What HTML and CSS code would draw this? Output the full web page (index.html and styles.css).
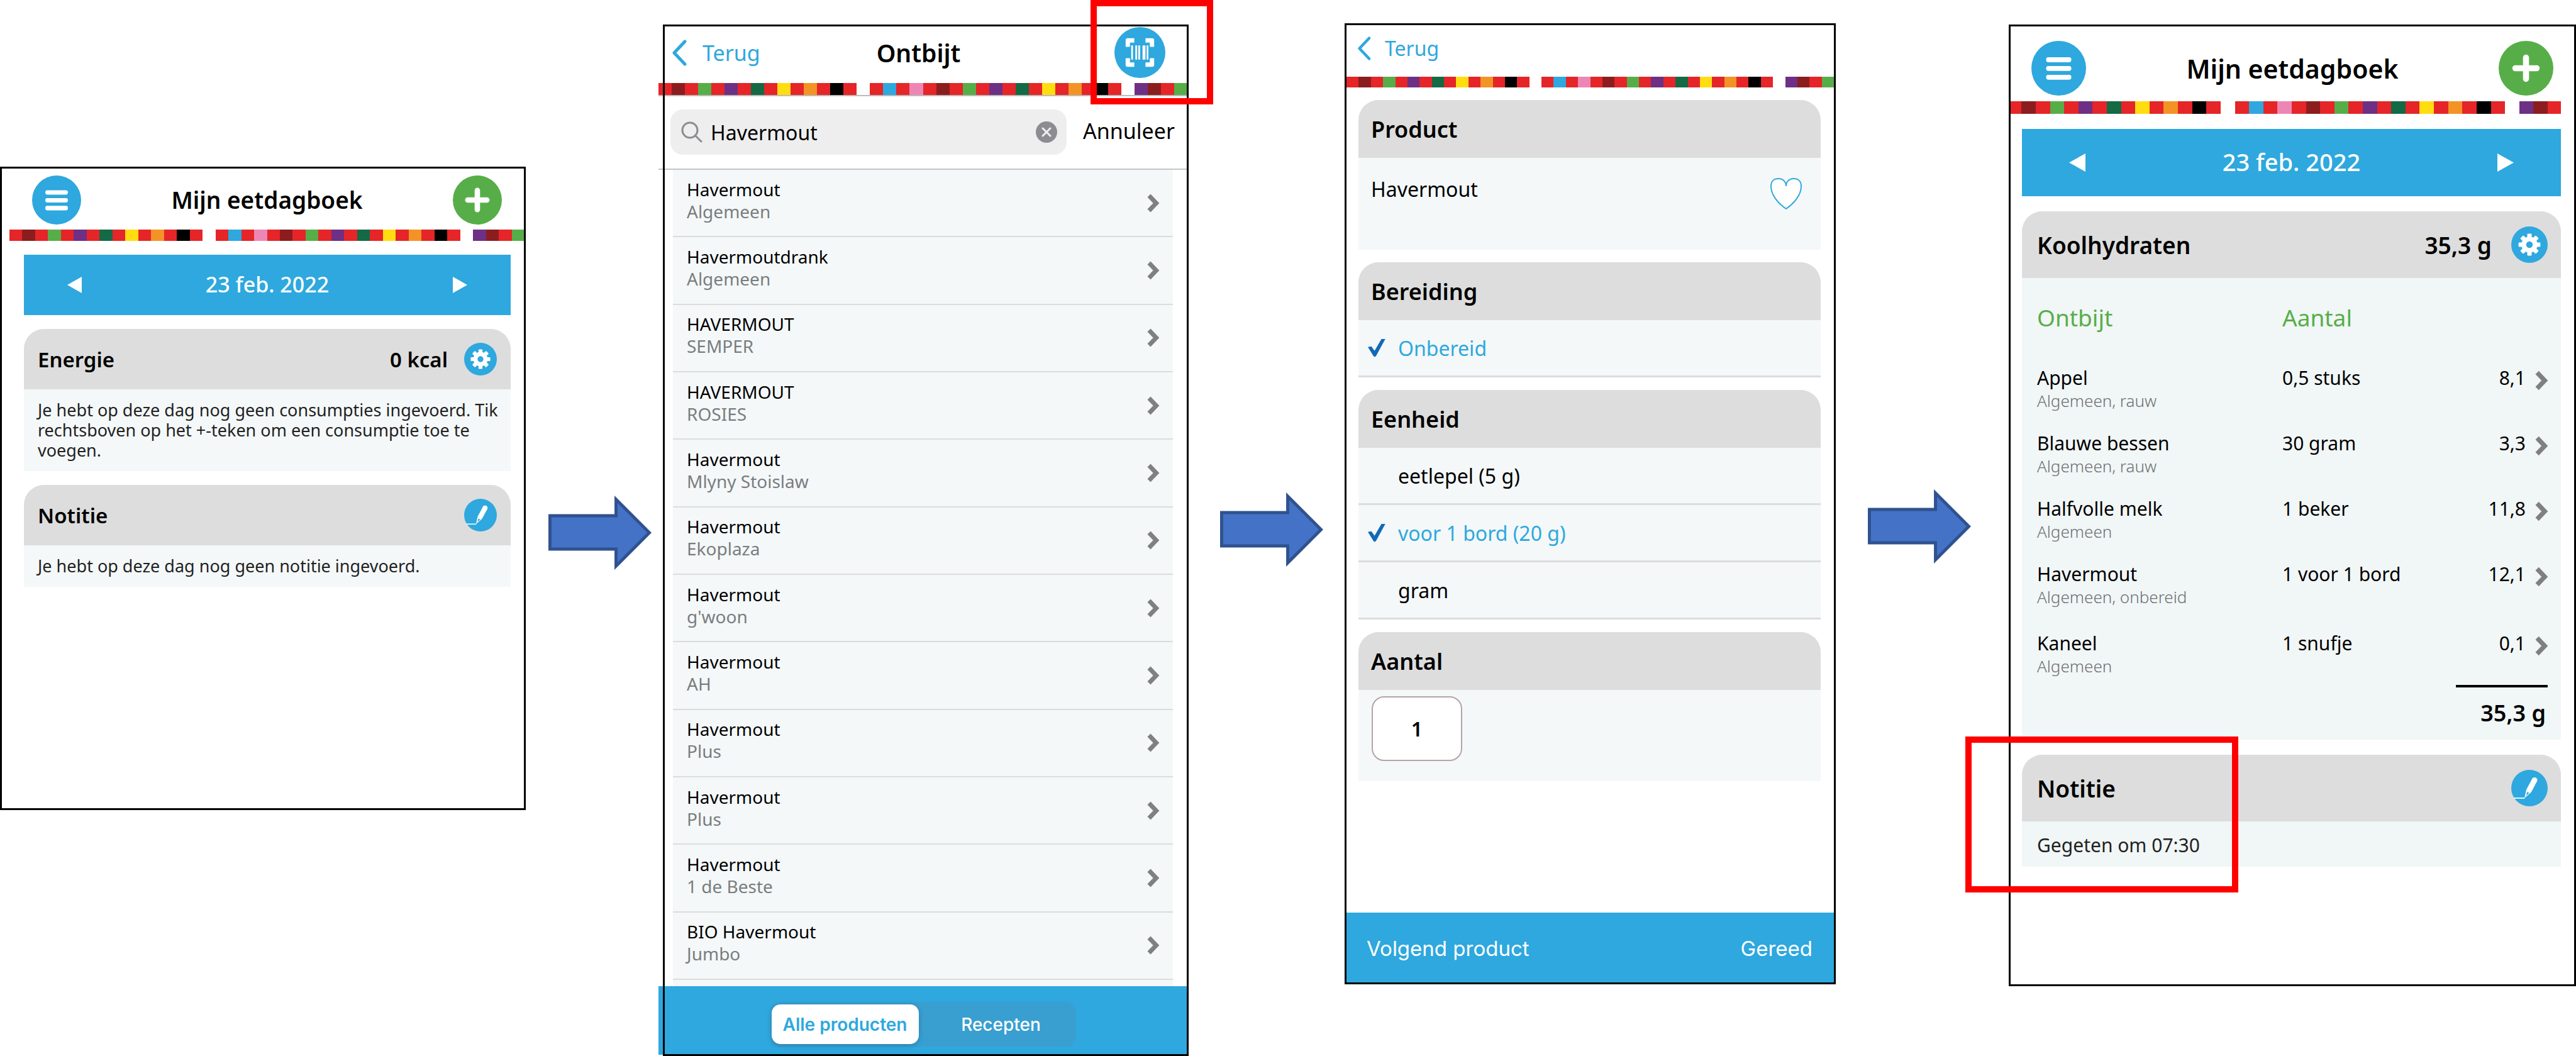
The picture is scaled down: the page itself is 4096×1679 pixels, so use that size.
FILE: index.html
```html
<!DOCTYPE html>
<html lang="nl">
<head>
<meta charset="utf-8">
<meta name="viewport" content="width=device-width, initial-scale=1">
<title>Mijn eetdagboek</title>
<link rel="stylesheet" href="styles.css">
</head>
<body>
<svg class="sprite" aria-hidden="true">
  <symbol id="menu" viewBox="0 0 100 100">
    <circle cx="50" cy="50" r="50" fill="#2ea8de"/>
    <g fill="#fff"><rect x="27" y="30" width="46" height="9" rx="4"/><rect x="27" y="46" width="46" height="9" rx="4"/><rect x="27" y="62" width="46" height="9" rx="4"/></g>
  </symbol>
  <symbol id="plus" viewBox="0 0 100 100">
    <circle cx="50" cy="50" r="50" fill="#57ae48"/>
    <path d="M50 30.500V69.500M30.500 50H69.500" stroke="#fff" stroke-width="11" stroke-linecap="round"/>
  </symbol>
  <symbol id="gear" viewBox="0 0 100 100">
    <circle cx="50" cy="50" r="50" fill="#2ea8de"/>
    <g fill="#fff">
      <circle cx="50" cy="50" r="22"/>
      <g><rect x="44" y="20" width="12" height="60" rx="2"/><rect x="20" y="44" width="60" height="12" rx="2"/></g>
      <g transform="rotate(45 50 50)"><rect x="44" y="20" width="12" height="60" rx="2"/><rect x="20" y="44" width="60" height="12" rx="2"/></g>
    </g>
    <circle cx="50" cy="50" r="9" fill="#2ea8de"/>
  </symbol>
  <symbol id="pen" viewBox="0 0 100 100">
    <circle cx="50" cy="50" r="50" fill="#2ea8de"/>
    <circle cx="64" cy="28" r="7.500" fill="#fff"/>
    <path d="M64 28L48 58" stroke="#fff" stroke-width="15"/>
    <path d="M54.600 61.500L41.400 54.500L36.500 77Z" fill="#fff"/>
    <path d="M43.500 60.500L49.500 63.500L41 70.500Z" fill="#2ea8de"/>
    <path d="M7 77.500H37" stroke="#fff" stroke-width="3"/>
  </symbol>
  <symbol id="scan" viewBox="0 0 100 100">
    <circle cx="50" cy="50" r="50" fill="#2ea8de"/>
    <g fill="#fff">
      <path d="M22 39V26a4 4 0 0 1 4-4H39V30.500H30.500V39Z"/>
      <path d="M22 39V26a4 4 0 0 1 4-4H39V30.500H30.500V39Z" transform="rotate(90 50 50)"/>
      <path d="M22 39V26a4 4 0 0 1 4-4H39V30.500H30.500V39Z" transform="rotate(180 50 50)"/>
      <path d="M22 39V26a4 4 0 0 1 4-4H39V30.500H30.500V39Z" transform="rotate(270 50 50)"/>
      <path d="M33 36h3.400v28H33zM41 36h3.600v28H41zM46.800 36h3.600v28h-3.600zM55.200 36h5.700v28h-5.700zM63.300 36h3.300v28h-3.300z"/>
    </g>
  </symbol>
  <symbol id="back" viewBox="0 0 24 42" preserveAspectRatio="xMinYMid meet">
    <path d="M21 3L4 21L21 39" fill="none" stroke="#2ea8de" stroke-width="5" stroke-linecap="round" stroke-linejoin="round"/>
  </symbol>
  <symbol id="next" viewBox="0 0 20 30">
    <path d="M3 3L14.500 15L3 27" fill="none" stroke="#808080" stroke-width="7"/>
  </symbol>
  <symbol id="heart" viewBox="0 0 50 50">
    <path d="M25 49C12 40 1 27 1 13C1 5 6 1 13 1C20 1 25 6 25 13C25 6 30 1 37 1C44 1 49 5 49 13C49 27 38 40 25 49Z" fill="#fff" stroke="#2ea8de" stroke-width="2"/>
  </symbol>
  <symbol id="loupe" viewBox="0 0 34 34">
    <circle cx="14" cy="14" r="12" fill="none" stroke="#8d8c92" stroke-width="3"/>
    <path d="M22.500 22.500L32 32" stroke="#8d8c92" stroke-width="3" stroke-linecap="round"/>
  </symbol>
  <symbol id="clear" viewBox="0 0 34 34">
    <circle cx="17" cy="17" r="17" fill="#8d8c92"/>
    <path d="M11 11L23 23M23 11L11 23" stroke="#efefef" stroke-width="3" stroke-linecap="round"/>
  </symbol>
  <symbol id="arrow" viewBox="0 0 167 120">
    <path d="M2.500 32.500H109.500V6L163.500 60L109.500 114V86.500H2.500Z" fill="#4472c6" stroke="#2f528f" stroke-width="5"/>
  </symbol>
  <symbol id="tiles" viewBox="0 0 40 1" preserveAspectRatio="none">
    <g shape-rendering="crispEdges">
      <path fill="#e52528" d="M0 0h15v1H0zM16 0h19v1H16zM38 0h1v1h-1z"/>
      <path fill="#8c1d1f" d="M1 0h1v1H1zM21 0h1v1h-1zM37 0h1v1h-1z"/>
      <path fill="#57ae48" d="M3 0h1v1H3zM23 0h1v1h-1zM39 0h1v1h-1z"/>
      <path fill="#6d3085" d="M5 0h1v1H5zM25 0h1v1h-1zM36 0h1v1h-1z"/>
      <path fill="#136a45" d="M7 0h1v1H7zM27 0h1v1h-1z"/>
      <path fill="#ffdd10" d="M9 0h1v1H9zM29 0h1v1h-1z"/>
      <path fill="#f39325" d="M11 0h1v1h-1zM31 0h1v1h-1z"/>
      <path fill="#000" d="M13 0h1v1h-1zM33 0h1v1h-1z"/>
      <path fill="#2ea8de" d="M17 0h1v1h-1z"/>
      <path fill="#ee86b5" d="M19 0h1v1h-1z"/>
    </g>
  </symbol>
</svg>

<main class="flow">
  <section class="screen diary">
    <header class="topbar">
      <button class="round" aria-label="Menu"><svg><use href="#menu"/></svg></button>
      <h1 class="title">Mijn eetdagboek</h1>
      <button class="round" aria-label="Toevoegen"><svg><use href="#plus"/></svg></button>
    </header>
    <svg class="tiles"><use href="#tiles"/></svg>
    <nav class="datebar">
      <button class="step step-back" aria-label="Vorige dag"></button>
      <span>23 feb. 2022</span>
      <button class="step step-on" aria-label="Volgende dag"></button>
    </nav>
    <article class="card">
      <header class="card-head">
        <h2>Energie</h2>
        <span class="amount">0 kcal</span>
        <button class="tool" aria-label="Instellingen"><svg><use href="#gear"/></svg></button>
      </header>
      <p class="note">Je hebt op deze dag nog geen consumpties ingevoerd. Tik rechtsboven op het +-teken om een consumptie toe te voegen.</p>
    </article>
    <article class="card">
      <header class="card-head">
        <h2>Notitie</h2>
        <button class="tool" aria-label="Bewerken"><svg><use href="#pen"/></svg></button>
      </header>
      <p class="note">Je hebt op deze dag nog geen notitie ingevoerd.</p>
    </article>
  </section>

  <div class="arrow arrow-1"><svg><use href="#arrow"/></svg></div>

  <section class="screen search">
    <div class="search-inner">
      <header class="topbar">
        <a class="back" href="#"><svg><use href="#back"/></svg>Terug</a>
        <h1 class="title">Ontbijt</h1>
        <button class="round" aria-label="Scan streepjescode"><svg><use href="#scan"/></svg></button>
      </header>
      <svg class="tiles"><use href="#tiles"/></svg>
      <form class="searchbar">
        <div class="field">
          <label for="q" aria-label="Zoek product"><svg class="loupe"><use href="#loupe"/></svg></label>
          <input id="q" type="text" value="Havermout">
          <button type="button" class="clear" aria-label="Wissen"><svg><use href="#clear"/></svg></button>
        </div>
        <button type="button" class="cancel">Annuleer</button>
      </form>
      <div class="results">
        <a href="#"><span>Havermout<small>Algemeen</small></span><svg><use href="#next"/></svg></a>
        <a href="#"><span>Havermoutdrank<small>Algemeen</small></span><svg><use href="#next"/></svg></a>
        <a href="#"><span>HAVERMOUT<small>SEMPER</small></span><svg><use href="#next"/></svg></a>
        <a href="#"><span>HAVERMOUT<small>ROSIES</small></span><svg><use href="#next"/></svg></a>
        <a href="#"><span>Havermout<small>Mlyny Stoislaw</small></span><svg><use href="#next"/></svg></a>
        <a href="#"><span>Havermout<small>Ekoplaza</small></span><svg><use href="#next"/></svg></a>
        <a href="#"><span>Havermout<small>g'woon</small></span><svg><use href="#next"/></svg></a>
        <a href="#"><span>Havermout<small>AH</small></span><svg><use href="#next"/></svg></a>
        <a href="#"><span>Havermout<small>Plus</small></span><svg><use href="#next"/></svg></a>
        <a href="#"><span>Havermout<small>Plus</small></span><svg><use href="#next"/></svg></a>
        <a href="#"><span>Havermout<small>1 de Beste</small></span><svg><use href="#next"/></svg></a>
        <a href="#"><span>BIO Havermout<small>Jumbo</small></span><svg><use href="#next"/></svg></a>
      </div>
      <footer class="tabs">
        <div class="segments">
          <button class="on">Alle producten</button>
          <button>Recepten</button>
        </div>
      </footer>
    </div>
    <div class="mark mark-scan"></div>
  </section>

  <div class="arrow arrow-2"><svg><use href="#arrow"/></svg></div>

  <section class="screen product">
    <header class="topbar">
      <a class="back" href="#"><svg><use href="#back"/></svg>Terug</a>
    </header>
    <svg class="tiles"><use href="#tiles"/></svg>
    <article class="card">
      <header class="card-head"><h2>Product</h2></header>
      <div class="chosen">
        <span>Havermout</span>
        <button class="like" aria-label="Favoriet"><svg><use href="#heart"/></svg></button>
      </div>
    </article>
    <article class="card">
      <header class="card-head"><h2>Bereiding</h2></header>
      <label class="option"><input type="radio" name="bereiding" checked><span>Onbereid</span></label>
    </article>
    <article class="card">
      <header class="card-head"><h2>Eenheid</h2></header>
      <label class="option"><input type="radio" name="eenheid"><span>eetlepel (5 g)</span></label>
      <label class="option"><input type="radio" name="eenheid" checked><span>voor 1 bord (20 g)</span></label>
      <label class="option"><input type="radio" name="eenheid"><span>gram</span></label>
    </article>
    <article class="card">
      <header class="card-head"><h2><label for="aantal">Aantal</label></h2></header>
      <div class="count"><input id="aantal" type="text" inputmode="numeric" value="1"></div>
    </article>
    <footer class="actions">
      <button>Volgend product</button>
      <button>Gereed</button>
    </footer>
  </section>

  <div class="arrow arrow-3"><svg><use href="#arrow"/></svg></div>

  <section class="screen diary diary-filled">
    <header class="topbar">
      <button class="round" aria-label="Menu"><svg><use href="#menu"/></svg></button>
      <h1 class="title">Mijn eetdagboek</h1>
      <button class="round" aria-label="Toevoegen"><svg><use href="#plus"/></svg></button>
    </header>
    <svg class="tiles" viewBox="0 0 3883 100" preserveAspectRatio="none"><use href="#tiles" x="-10" width="4000" height="100"/></svg>
    <nav class="datebar">
      <button class="step step-back" aria-label="Vorige dag"></button>
      <span>23 feb. 2022</span>
      <button class="step step-on" aria-label="Volgende dag"></button>
    </nav>
    <article class="card">
      <header class="card-head">
        <h2>Koolhydraten</h2>
        <span class="amount">35,3 g</span>
        <button class="tool" aria-label="Instellingen"><svg><use href="#gear"/></svg></button>
      </header>
      <table class="meals">
        <colgroup><col class="col-name"><col><col class="col-value"><col class="col-next"></colgroup>
        <thead><tr><th>Ontbijt</th><th>Aantal</th><th></th><th></th></tr></thead>
        <tbody>
          <tr><td>Appel<small>Algemeen, rauw</small></td><td>0,5 stuks</td><td>8,1</td><td><a href="#" aria-label="Appel"><svg><use href="#next"/></svg></a></td></tr>
          <tr><td>Blauwe bessen<small>Algemeen, rauw</small></td><td>30 gram</td><td>3,3</td><td><a href="#" aria-label="Blauwe bessen"><svg><use href="#next"/></svg></a></td></tr>
          <tr><td>Halfvolle melk<small>Algemeen</small></td><td>1 beker</td><td>11,8</td><td><a href="#" aria-label="Halfvolle melk"><svg><use href="#next"/></svg></a></td></tr>
          <tr><td>Havermout<small>Algemeen, onbereid</small></td><td>1 voor 1 bord</td><td>12,1</td><td><a href="#" aria-label="Havermout"><svg><use href="#next"/></svg></a></td></tr>
          <tr><td>Kaneel<small>Algemeen</small></td><td>1 snufje</td><td>0,1</td><td><a href="#" aria-label="Kaneel"><svg><use href="#next"/></svg></a></td></tr>
        </tbody>
        <tfoot><tr><td colspan="4"><span class="total">35,3 g</span></td></tr></tfoot>
      </table>
    </article>
    <article class="card">
      <header class="card-head">
        <h2>Notitie</h2>
        <button class="tool" aria-label="Bewerken"><svg><use href="#pen"/></svg></button>
      </header>
      <p class="note">Gegeten om 07:30</p>
      <div class="mark mark-note"></div>
    </article>
  </section>
</main>
</body>
</html>
```

FILE: styles.css
```css
* { box-sizing: border-box; }

body {
  margin: 0;
  background: #fff;
  color: #000;
  font-family: "Noto Sans", sans-serif;
}

h1, h2, p { margin: 0; }
button, input { font: inherit; color: inherit; margin: 0; padding: 0; border: 0; background: none; }
a { color: inherit; text-decoration: none; }
svg { display: block; }
small { display: block; }
.sprite { position: absolute; width: 0; height: 0; }

.flow {
  display: grid;
  grid-template-columns: 836fr 218fr 836fr 248fr 781fr 275fr 902fr;
  align-items: start;
  min-height: 100vh;
}

/* Arrows between the screens */
.arrow { display: flex; justify-content: flex-end; }
.arrow svg { width: 164px; height: 118px; }
.arrow-1 { padding: 788px 18px 0 0; }
.arrow-2 { padding: 783px 34px 0 0; }
.arrow-3 { padding: 778px 60px 0 0; }

/* Screen frame, drawn over the content */
.screen { position: relative; display: flex; flex-direction: column; }
.screen::after {
  content: "";
  position: absolute;
  inset: 0;
  border: 3px solid #000;
  pointer-events: none;
}

.mark { position: absolute; z-index: 2; border: 10px solid #f00; pointer-events: none; }
.mark-scan { top: -39px; right: -39px; width: 195px; height: 166px; }
.mark-note { top: -29px; left: -90px; width: 434px; height: 248px; }

.topbar { display: flex; align-items: center; justify-content: space-between; }
.title { font-weight: 600; line-height: 48px; }
.round svg { width: 100%; height: 100%; }
.back { display: flex; align-items: center; color: #2ea8de; }
.tiles { width: auto; }

/* Cards */
.card { position: relative; background: #f4f8f9; border-radius: 32px 32px 0 0; }
.card-head {
  display: flex;
  align-items: center;
  background: #ddd;
  border-radius: 32px 32px 0 0;
  font-weight: 600;
}
.card-head h2 { flex: 1; font-size: inherit; font-weight: inherit; }
.tool svg { width: 100%; height: 100%; }
.note { color: #222; }

/* Diary */
.diary { margin-top: 265px; padding-bottom: 355px; }
.diary .topbar { padding: 14px 38px 8px 51px; }
.diary .round { width: 78px; height: 78px; }
.diary .title { font-size: 37px; }
.diary .tiles { height: 18px; margin: 0 2px 0 15px; }
.datebar {
  display: flex;
  align-items: center;
  justify-content: space-between;
  height: 96px;
  margin: 22px 24px 0 38px;
  padding: 0 69px;
  background: #2ea8de;
  color: #fff;
  font-size: 34px;
  font-weight: 500;
}
.datebar span { padding-bottom: 3px; }
.step { width: 23px; height: 26px; background: #fff; }
.step-back { clip-path: polygon(100% 0, 100% 100%, 0 50%); }
.step-on { clip-path: polygon(0 0, 100% 50%, 0 100%); }
.diary .card { margin: 22px 24px 0 38px; }
.diary .card-head { height: 96px; padding: 0 22px; font-size: 33px; }
.diary .tool { width: 52px; height: 52px; margin-left: 26px; }
.diary .note { padding: 17px 8px 17px 22px; font-size: 27px; line-height: 32px; }

/* Diary with a meal */
.diary-filled { margin-top: 39px; padding-bottom: 190px; }
.diary-filled .topbar { padding: 26px 36px 9px; }
.diary-filled .round { width: 87px; height: 87px; }
.diary-filled .title { font-size: 41px; }
.diary-filled .tiles { height: 20px; margin: 0 24px 0 0; }
.diary-filled .datebar { height: 107px; margin: 24px 24px 0 21px; padding: 0 75px; font-size: 38px; }
.diary-filled .step { width: 26px; height: 29px; }
.diary-filled .card { margin: 24px 24px 0 21px; background: #f1f6f6; }
.diary-filled .card-head { height: 106px; padding: 0 21px 0 24px; font-size: 37px; }
.diary-filled .tool { width: 58px; height: 58px; margin-left: 31px; }
.diary-filled .note { padding: 20px 8px 16px 24px; font-size: 30px; line-height: 36px; }

.meals { width: 100%; table-layout: fixed; border-collapse: collapse; font-size: 30px; line-height: 36px; }
.meals .col-name { width: 414px; }
.meals .col-value { width: 140px; }
.meals .col-next { width: 56px; }
.meals th { height: 125px; padding: 0; color: #57ae48; font-size: 37px; font-weight: 400; text-align: left; }
.meals td { padding: 16px 0; vertical-align: top; }
.meals th:first-child, .meals td:first-child { padding-left: 24px; }
.meals td:nth-child(3) { text-align: right; }
.meals td:nth-child(4) { padding: 22px 0 0 15px; }
.meals small { color: #6c7071; font-size: 26px; font-weight: 300; }
.meals svg { width: 21px; height: 32px; }
.meals tbody tr:last-child td { padding-top: 22px; padding-bottom: 12px; }
.meals tbody tr:last-child td:nth-child(4) { padding-top: 28px; }
.meals tfoot td { padding: 0 21px 0 0; }
.total {
  display: block;
  width: 146px;
  height: 87px;
  margin-left: auto;
  padding-right: 3px;
  border-top: 4px solid #000;
  font-size: 36px;
  font-weight: 600;
  line-height: 82px;
  text-align: right;
}

/* Search */
.search { margin-top: 39px; align-self: stretch; }
.search-inner { flex: 1; display: flex; flex-direction: column; margin: 0 2px 2px -7px; }
.search .topbar { display: grid; grid-template-columns: 1fr auto 1fr; padding: 4px 35px 8px 21px; }
.search .back { gap: 24px; font-size: 34px; }
.search .back svg { width: 25px; height: 42px; }
.search .title { font-size: 39px; }
.search .round { width: 81px; height: 81px; justify-self: end; }
.search .tiles { height: 19px; }
.searchbar {
  display: flex;
  align-items: center;
  gap: 26px;
  padding: 21px 20px 22px 19px;
  border-top: 2px solid #bcbcbc;
  border-bottom: 2px solid #c2c5c6;
  font-size: 32px;
}
.field {
  flex: 1;
  display: flex;
  align-items: center;
  height: 72px;
  padding: 0 15px 0 17px;
  border-radius: 20px;
  background: #eee;
}
.field input { flex: 1; min-width: 0; margin-left: 13px; }
.loupe, .clear svg { width: 34px; height: 34px; }
.cancel { padding-bottom: 4px; font-size: 34px; }
.results {
  flex: 1;
  display: flex;
  flex-direction: column;
  margin: 0 23px;
  padding-bottom: 10px;
  background: #f4f8f9;
}
.results a {
  flex: 1;
  display: flex;
  align-items: center;
  justify-content: space-between;
  padding: 0 21px 0 22px;
  border-bottom: 2px solid #dcdcdc;
  font-size: 28px;
  line-height: 35px;
}
.results span { padding-bottom: 8px; }
.results small { color: #7a7d7e; font-size: 28px; }
.results svg { width: 20px; height: 30px; }
.tabs { display: flex; justify-content: center; padding: 25px 0 13px; background: #2ea8de; }
.segments {
  display: grid;
  grid-template-columns: 1fr 1fr;
  width: 486px;
  padding: 4px 2px;
  gap: 14px;
  border-radius: 16px;
  background: #389fd0;
}
.segments button {
  height: 63px;
  border-radius: 14px;
  color: #fff;
  font-family: Inter, sans-serif;
  font-size: 28px;
  font-weight: 500;
}
.segments .on { background: #fff; color: #2ea8de; font-weight: 600; box-shadow: 0 2px 8px rgba(0, 0, 0, 0.2); }

/* Product */
.product { margin-top: 37px; }
.product .topbar { padding: 21px 20px 26px; }
.product .back { gap: 22px; font-size: 32px; line-height: 38px; }
.product .back svg { width: 22px; height: 38px; }
.product .tiles { height: 17px; margin: 0 3px; }
.product .card { margin: 20px 24px 0 22px; font-size: 32px; }
.product .card-head { height: 92px; padding: 0 20px; font-size: 36px; }
.chosen {
  display: flex;
  align-items: flex-start;
  justify-content: space-between;
  padding: 32px 30px 64px 20px;
  line-height: 36px;
}
.like svg { width: 50px; height: 50px; }
.option {
  display: flex;
  align-items: center;
  gap: 20px;
  height: 91px;
  padding-left: 15px;
  border-bottom: 3px solid #dcdcdc;
}
.option input { appearance: none; width: 28px; height: 29px; }
.option input:checked {
  background: #126ab6;
  clip-path: polygon(0 46%, 20% 42%, 38% 66%, 78% 0, 100% 0, 46% 96%, 38% 100%, 32% 96%);
}
.option input:checked + span { color: #2ea8de; }
.count { padding: 10px 21px 32px; }
.count input {
  display: block;
  width: 144px;
  height: 103px;
  border: 2px solid #b3a5a5;
  border-radius: 20px;
  background: #fff;
  font-weight: 600;
  text-align: center;
}
.actions {
  display: flex;
  align-items: center;
  justify-content: space-between;
  height: 114px;
  margin-top: 209px;
  padding: 0 37px 0 35px;
  background: #2ea8de;
  color: #fff;
  font-family: Inter, sans-serif;
  font-size: 33px;
}
```
